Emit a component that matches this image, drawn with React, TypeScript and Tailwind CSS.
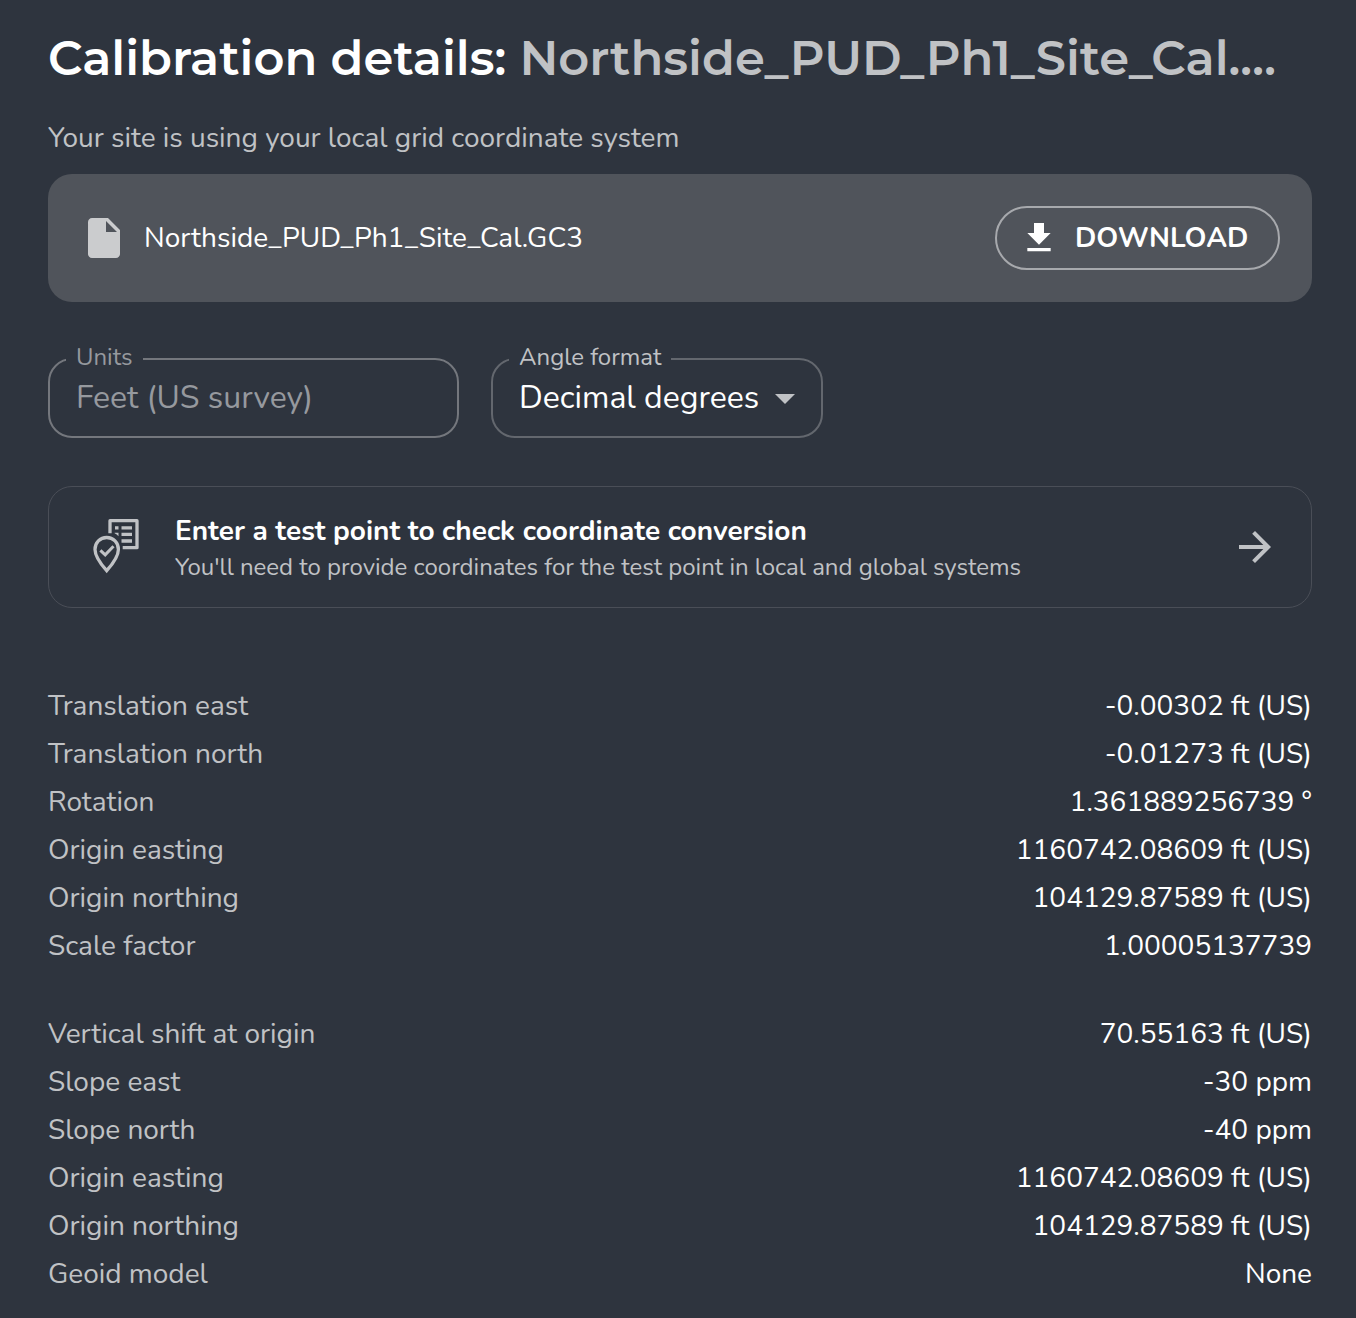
import type { ReactNode } from "react";

const horizontal = [
  { label: "Translation east", value: "-0.00302 ft (US)" },
  { label: "Translation north", value: "-0.01273 ft (US)" },
  { label: "Rotation", value: "1.361889256739 °" },
  { label: "Origin easting", value: "1160742.08609 ft (US)" },
  { label: "Origin northing", value: "104129.87589 ft (US)" },
  { label: "Scale factor", value: "1.00005137739" },
];

const vertical = [
  { label: "Vertical shift at origin", value: "70.55163 ft (US)" },
  { label: "Slope east", value: "-30 ppm" },
  { label: "Slope north", value: "-40 ppm" },
  { label: "Origin easting", value: "1160742.08609 ft (US)" },
  { label: "Origin northing", value: "104129.87589 ft (US)" },
  { label: "Geoid model", value: "None" },
];

const Icon = ({ d, className }: { d: string; className: string }) => (
  <svg viewBox="0 0 24 24" fill="currentColor" className={`shrink-0 ${className}`}>
    <path d={d} />
  </svg>
);

const TestPointIcon = () => (
  <svg viewBox="0 0 56 56" className="size-14 shrink-0 text-[#c0c2c5]" fill="none" stroke="currentColor" strokeWidth="3.3">
    <path d="M22 14.2V1.7H49V28.7H34.7" strokeLinejoin="round" />
    <path d="M27 8.8h3.5M33.5 8.8h10.5M33.5 15.4h10.5M33.5 22h10.5" />
    <path d="M26.6 13.8h3.9v3.4c-1.1-1.3-2.4-2.3-3.9-2.9z" fill="currentColor" stroke="none" />
    <path d="M18.7 18.5c-6.6 0-11.7 5.1-11.7 11.9 0 6 4.3 12.9 11.7 21.3 7.4-8.4 11.7-15.3 11.7-21.3 0-6.8-5.1-11.9-11.7-11.9z" />
    <path d="M12.4 31.3l4.8 4.5 8.3-8.6" strokeWidth="3" />
  </svg>
);

const Field = ({ label, className, children }: { label: string; className: string; children: ReactNode }) => (
  <fieldset className={`h-[91px] rounded-3xl border-2 pl-4 ${className}`}>
    <legend className="h-6 px-[10px] text-2xl leading-5">{label}</legend>
    <div className="flex h-[54px] items-center pl-[10px] text-[32px] leading-none">{children}</div>
  </fieldset>
);

const Rows = ({ rows }: { rows: { label: string; value: string }[] }) => (
  <dl>
    {rows.map((row) => (
      <div key={row.label} className="flex h-12 items-center justify-between">
        <dt className="text-[#c0c2c5]">{row.label}</dt>
        <dd>{row.value}</dd>
      </div>
    ))}
  </dl>
);

export default function App() {
  return (
    <div className="h-[1318px] overflow-hidden bg-[#2e343e] pt-7 pr-11 pl-12 font-['Nunito','Lato',sans-serif] text-[28px] leading-10 text-white antialiased">
      <h1 className="truncate font-['Montserrat','Inter',sans-serif] text-5xl leading-[60px] font-semibold">
        Calibration details: <span className="text-[#c0c2c5]">Northside_PUD_Ph1_Site_Cal.…</span>
      </h1>

      <p className="mt-[30px] text-[#c0c2c5]">Your site is using your local grid coordinate system</p>

      <div className="mt-4 flex h-32 items-center rounded-3xl bg-[#50545b] px-8">
        <Icon
          className="size-12 text-[#cbccce]"
          d="M6 2c-1.1 0-1.99.9-1.99 2L4 20c0 1.1.89 2 1.99 2H18c1.1 0 2-.9 2-2V8l-6-6H6zm7 7V3.5L18.5 9H13z"
        />
        <span className="ml-4">Northside_PUD_Ph1_Site_Cal.GC3</span>
        <button className="ml-auto flex h-16 w-[285px] items-center rounded-full border-2 border-[#a7a9ad] pl-[22px] font-bold">
          <Icon className="size-10" d="M19 9h-4V3H9v6H5l7 7 7-7zM5 18v2h14v-2H5z" />
          <span className="ml-4">DOWNLOAD</span>
        </button>
      </div>

      <div className="mt-[45px] flex gap-8">
        <Field label="Units" className="w-[411px] border-[#74777d] text-[#96999e]">
          Feet (US survey)
        </Field>
        <Field label="Angle format" className="w-[332px] border-[#63676e] text-[#c0c2c5]">
          <span className="text-white">Decimal degrees</span>
          <Icon className="ml-0.5 size-12" d="M7 10l5 5 5-5z" />
        </Field>
      </div>

      <div className="mt-12 flex h-[122px] items-center rounded-3xl border border-[#4a4e57] pr-8 pl-[39px]">
        <TestPointIcon />
        <div className="ml-[31px] pt-1">
          <p className="leading-9 font-bold">Enter a test point to check coordinate conversion</p>
          <p className="text-2xl leading-9 text-[#c0c2c5]">
            You'll need to provide coordinates for the test point in local and global systems
          </p>
        </div>
        <Icon className="ml-auto size-12 text-[#c0c2c5]" d="M12 4l-1.41 1.41L16.17 11H4v2h12.17l-5.58 5.59L12 20l8-8z" />
      </div>

      <div className="mt-[74px] flex flex-col gap-10">
        <Rows rows={horizontal} />
        <Rows rows={vertical} />
      </div>
    </div>
  );
}
